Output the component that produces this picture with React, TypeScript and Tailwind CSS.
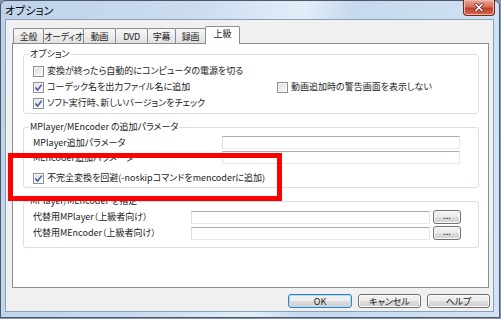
import type { ReactNode } from 'react'

const tabs = [
  { label: '全般', w: 'w-[31px]' },
  { label: 'オーディオ', w: 'w-[41px]' },
  { label: '動画', w: 'w-[33px]' },
  { label: 'DVD', w: 'w-[33px]' },
  { label: '字幕', w: 'w-[29px]' },
  { label: '録画', w: 'w-[31px]' },
]

function CheckBox({ checked = false }: { checked?: boolean }) {
  return (
    <span className="flex h-[11px] w-[11px] shrink-0 items-center justify-center border border-[#8f8f8f] bg-[linear-gradient(135deg,#d9dde2,#fafafa)] shadow-[inset_0_0_0_1px_#f6f6f6]">
      {checked && (
        <svg width="9" height="9" viewBox="0 0 9 9">
          <path d="M1.3 4.6 L3.6 7 L7.8 1.6" fill="none" stroke="#3f5a9c" strokeWidth="1.5" />
        </svg>
      )}
    </span>
  )
}

function CheckRow({ checked, children }: { checked?: boolean; children: ReactNode }) {
  return (
    <label className="flex h-[16px] items-center gap-[3px] whitespace-nowrap">
      <CheckBox checked={checked} />
      <span>{children}</span>
    </label>
  )
}

function TextBox({ className = '' }: { className?: string }) {
  return (
    <div
      className={`border border-t-[#abadb3] border-r-[#e3e9ef] border-b-[#e3e9ef] border-l-[#dbdfe6] bg-white ${className}`}
    />
  )
}

function WinButton({
  children,
  primary = false,
  className = '',
}: {
  children: ReactNode
  primary?: boolean
  className?: string
}) {
  return (
    <button
      className={`flex items-center justify-center rounded-[3px] border bg-[linear-gradient(#f2f2f2_0%,#ebebeb_50%,#dddddd_51%,#cfcfcf_100%)] leading-none whitespace-nowrap text-[#1b1b1b] ${
        primary
          ? 'border-[#3c7fb1] shadow-[inset_0_0_0_1px_#a8e0fa]'
          : 'border-[#707070] shadow-[inset_0_0_0_1px_#fbfbfb]'
      } ${className}`}
    >
      {children}
    </button>
  )
}

function Group({
  title,
  className = '',
  children,
}: {
  title: string
  className?: string
  children: ReactNode
}) {
  return (
    <fieldset className={`rounded-[3px] border border-[#d5dfe5] ${className}`}>
      <legend className="ml-[5px] px-[1px] leading-[12px] whitespace-nowrap">{title}</legend>
      {children}
    </fieldset>
  )
}

export default function App() {
  return (
    <div className="relative h-[319px] w-[501px] overflow-hidden bg-[#8796a8] font-['Noto_Sans_CJK_JP',sans-serif] text-[9px] text-[#1b1b1b] [font-feature-settings:'palt']">
      {/* window frame */}
      <div className="flex h-[318px] w-[500px] flex-col rounded-t-[6px] border border-[#4a5868] bg-[linear-gradient(100deg,#bdd2ea_0%,#cbdcf0_35%,#e2edf8_55%,#c6d9ee_64%,#d3e3f4_100%)]">
        {/* title bar */}
        <div className="flex h-[18px] items-start justify-between">
          <span className="pt-[2px] pl-[4px] text-[11px] leading-[14px] text-black">オプション</span>
          <button className="-mt-px mr-[4px] flex h-[16px] w-[32px] items-center justify-center rounded-b-[4px] border border-t-0 border-[#6e2b22] bg-[linear-gradient(#e9a99c_0%,#d9705b_45%,#c2402a_55%,#d8664d_100%)] shadow-[inset_0_0_0_1px_#f0b7aa]">
            <svg width="10" height="9" viewBox="0 0 10 9">
              <path d="M2 1.5 L8 7.5 M8 1.5 L2 7.5" stroke="#5a2018" strokeWidth="3" strokeLinecap="square" />
              <path d="M2 1.5 L8 7.5 M8 1.5 L2 7.5" stroke="#ffffff" strokeWidth="1.6" strokeLinecap="square" />
            </svg>
          </button>
        </div>

        {/* client area */}
        <div className="mr-[5px] ml-[4px] flex h-[293px] flex-col border border-[#8aa0b8] bg-[#f0f0f0]">
          {/* tab strip */}
          <div className="flex items-end pt-[6px] pl-[7px]">
            {tabs.map((t, i) => (
              <div
                key={t.label}
                className={`flex h-[15px] items-center justify-center rounded-t-[2px] border border-b-0 border-[#898c95] bg-[linear-gradient(#f8f8f8,#ececec_50%,#e1e1e1)] leading-none tracking-[-0.3px] whitespace-nowrap ${t.w} ${
                  i === 0 ? '' : '-ml-px'
                }`}
              >
                {t.label}
              </div>
            ))}
            <div className="relative z-10 -mb-px -ml-px flex h-[18px] w-[35px] items-start justify-center rounded-t-[2px] border border-b-0 border-[#898c95] bg-white pt-[2px] leading-none">
              上級
            </div>
          </div>

          {/* tab panel */}
          <div className="mr-[4px] ml-[6px] flex h-[245px] flex-col border border-[#898c95] bg-white pt-[4px] pr-[9px] pl-[10px]">
            <Group title="オプション">
              <div className="flex flex-col pt-[3px] pb-[2px] pl-[9px]">
                <CheckRow>変換が終ったら自動的にコンピュータの電源を切る</CheckRow>
                <div className="flex">
                  <div className="w-[244px]">
                    <CheckRow checked>コーデック名を出力ファイル名に追加</CheckRow>
                  </div>
                  <CheckRow>動画追加時の警告画面を表示しない</CheckRow>
                </div>
                <CheckRow checked>ソフト実行時、新しいバージョンをチェック</CheckRow>
              </div>
            </Group>

            <Group title="MPlayer/MEncoder の追加パラメータ" className="mt-[7px]">
              <div className="flex flex-col pt-[2px] pb-[1px] pl-[9px]">
                <div className="grid h-[15px] grid-cols-[189px_238px] items-center">
                  <span>MPlayer追加パラメータ</span>
                  <TextBox className="h-[13px]" />
                </div>
                <div className="grid h-[15px] grid-cols-[189px_238px] items-center">
                  <span>MEncoder追加パラメータ</span>
                  <TextBox className="h-[13px]" />
                </div>
                <div className="mt-[5px]">
                  <CheckRow checked>不完全変換を回避(-noskipコマンドをmencoderに追加)</CheckRow>
                </div>
              </div>
            </Group>

            <Group title="MPlayer/MEncoder を指定" className="mt-[7px]">
              <div className="flex flex-col pt-[2px] pb-[6px] pl-[9px]">
                <div className="grid h-[16px] grid-cols-[155px_239px_28px] items-center gap-x-[3px]">
                  <span>代替用MPlayer（上級者向け）</span>
                  <TextBox className="h-[13px]" />
                  <WinButton className="h-[14px] pb-[3px]">...</WinButton>
                </div>
                <div className="grid h-[16px] grid-cols-[155px_239px_28px] items-center gap-x-[3px]">
                  <span>代替用MEncoder（上級者向け）</span>
                  <TextBox className="h-[13px]" />
                  <WinButton className="h-[14px] pb-[3px]">...</WinButton>
                </div>
              </div>
            </Group>
          </div>

          {/* dialog buttons */}
          <div className="mt-[6px] flex justify-end gap-[6px] pr-[3px]">
            <WinButton primary className="h-[14px] w-[64px]">
              OK
            </WinButton>
            <WinButton className="h-[14px] w-[63px]">キャンセル</WinButton>
            <WinButton className="h-[14px] w-[63px]">ヘルプ</WinButton>
          </div>
        </div>
      </div>

      {/* red highlight drawn over the screenshot */}
      <div className="pointer-events-none absolute top-[153px] left-[8px] h-[48px] w-[274px] border-[5px] border-[#ff0000]" />
    </div>
  )
}
